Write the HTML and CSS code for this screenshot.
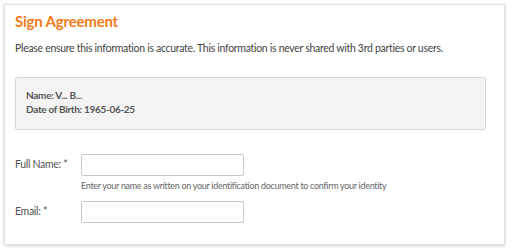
FILE: index.html
```html
<!DOCTYPE html>
<html lang="en">
<head>
  <meta charset="UTF-8">
  <title>Sign Agreement</title>
  <link rel="stylesheet" href="styles.css">
</head>
<body>
  <div class="card">
    <h1 class="title">Sign Agreement</h1>
    <p class="intro">Please ensure this information is accurate. This information is never shared with 3rd parties or users.</p>

    <div class="info-box">
      <div>Name: V... B...</div>
      <div>Date of Birth: 1965-06-25</div>
    </div>

    <div class="form">
      <label class="label" for="fullname">Full Name: *</label>
      <div class="field">
        <input type="text" id="fullname" class="input">
        <div class="help">Enter your name as written on your identification document to confirm your identity</div>
      </div>

      <label class="label" for="email">Email: *</label>
      <div class="field">
        <input type="text" id="email" class="input">
      </div>
    </div>
  </div>
</body>
</html>
```

FILE: styles.css
```css
body {
  margin: 0;
  padding: 4px 7px 5px 4px;
  background-color: #ffffff;
  font-family: Lato, "Open Sans", Arial, sans-serif;
  color: #444;
}
.card {
  background-color: #fff;
  border: 1px solid #e2e2e2;
  box-shadow: 0 1px 3px rgba(0, 0, 0, 0.18);
  padding: 6px 18px 20px 10px;
  height: 213px;
}
.title {
  margin: 0;
  font-size: 15px;
  font-weight: bold;
  letter-spacing: -0.2px;
  color: #f47a20;
  line-height: 20px;
}
.intro {
  margin: 10px 0 0;
  font-size: 10.5px;
  letter-spacing: -0.3px;
  line-height: 14px;
  color: #444;
}
.info-box {
  margin-top: 22px;
  background-color: #f4f4f4;
  border: 1px solid #d8d8d8;
  border-radius: 2px;
  padding: 10px 10px 13px;
  font-size: 10px;
  font-weight: bold;
  letter-spacing: -0.3px;
  line-height: 14px;
  color: #555;
}
.form {
  display: grid;
  grid-template-columns: 66px 1fr;
  row-gap: 9px;
  margin-top: 24px;
}
.label {
  font-size: 10.5px;
  letter-spacing: -0.3px;
  color: #555;
  line-height: 20px;
}
.input {
  display: block;
  box-sizing: border-box;
  width: 163px;
  height: 22px;
  border: 1px solid #c8c8c8;
  border-radius: 2px;
  margin: 0;
}
.help {
  font-size: 9px;
  letter-spacing: -0.3px;
  color: #666;
  margin-top: 4px;
  line-height: 12px;
}
```
